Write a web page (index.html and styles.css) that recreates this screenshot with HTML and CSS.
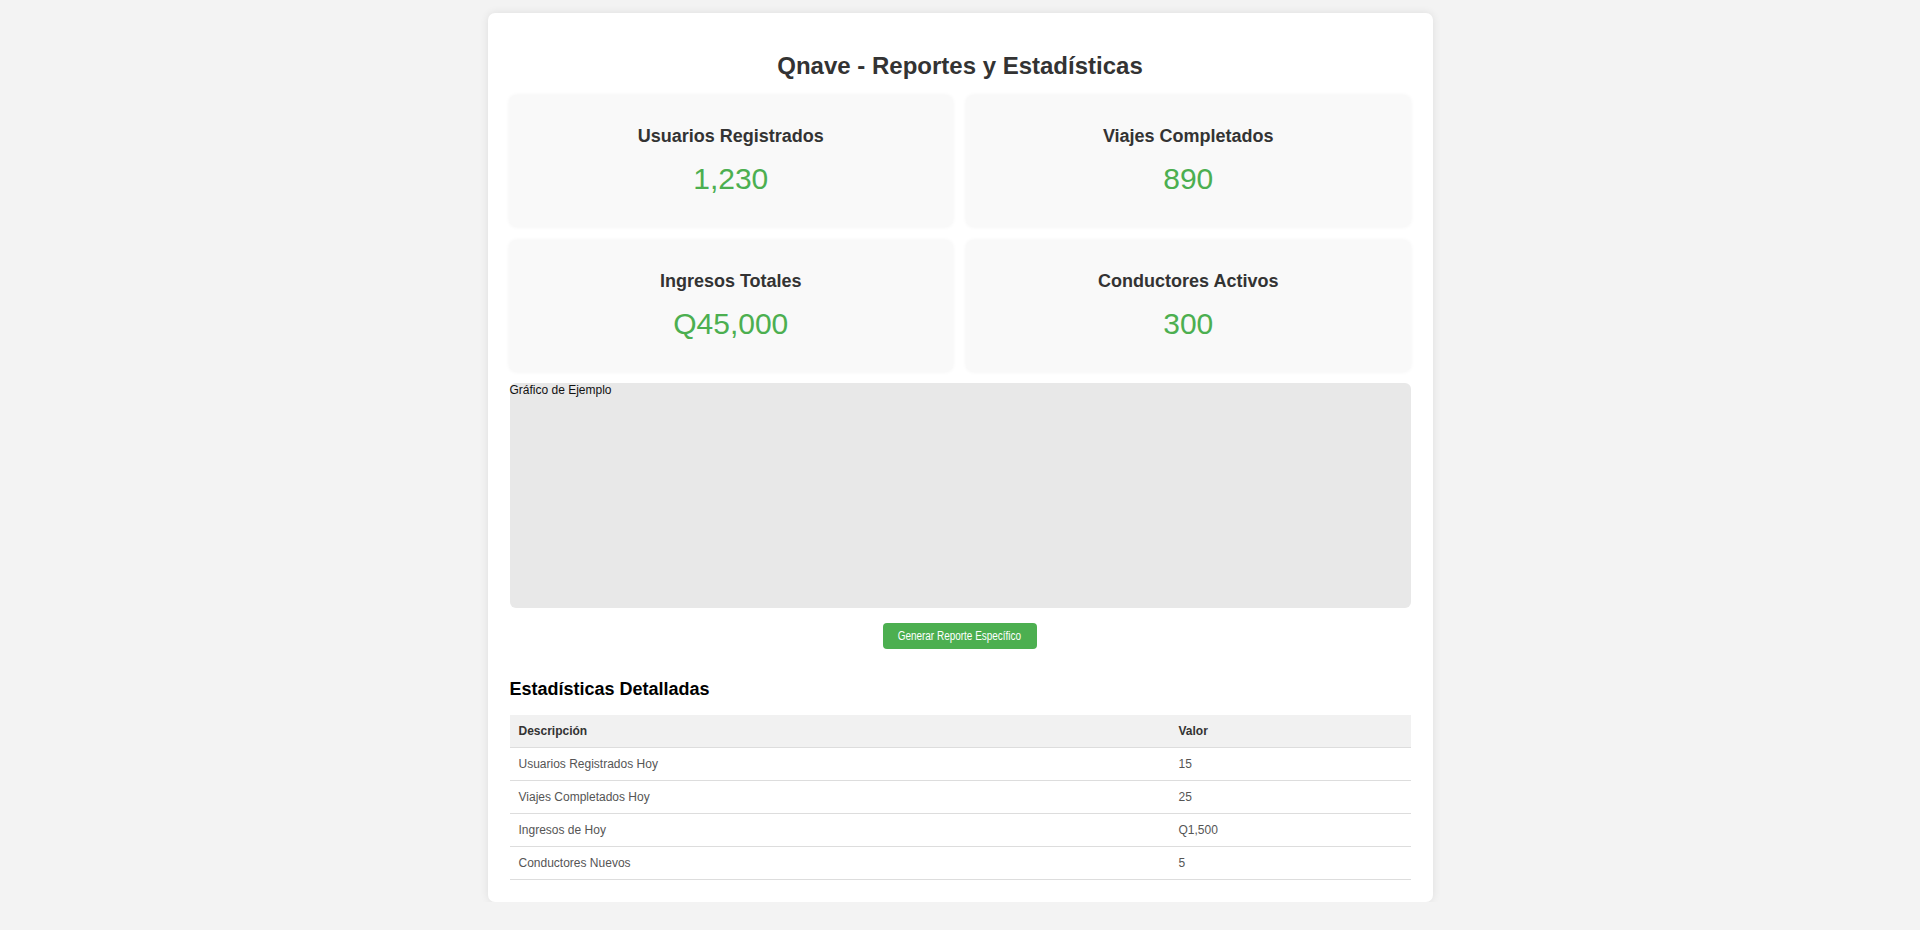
FILE: index.html
```html
<!DOCTYPE html>
<html lang="es">
<head>
<meta charset="utf-8">
<title>Qnave - Reportes y Estadísticas</title>
<link rel="stylesheet" href="styles.css">
</head>
<body>
<div class="container">
  <h1 class="title">Qnave - Reportes y Estadísticas</h1>
  <div class="stats">
    <div class="card"><h2 class="card-title">Usuarios Registrados</h2><p class="card-value">1,230</p></div>
    <div class="card"><h2 class="card-title">Viajes Completados</h2><p class="card-value">890</p></div>
    <div class="card"><h2 class="card-title">Ingresos Totales</h2><p class="card-value">Q45,000</p></div>
    <div class="card"><h2 class="card-title">Conductores Activos</h2><p class="card-value">300</p></div>
  </div>
  <div class="chart">Gráfico de Ejemplo</div>
  <div class="actions"><button class="btn" type="button"><span class="btn-label">Generar Reporte Específico</span></button></div>
  <h3 class="section-title">Estadísticas Detalladas</h3>
  <table class="table">
    <thead>
      <tr><th class="col-desc">Descripción</th><th>Valor</th></tr>
    </thead>
    <tbody>
      <tr><td>Usuarios Registrados Hoy</td><td>15</td></tr>
      <tr><td>Viajes Completados Hoy</td><td>25</td></tr>
      <tr><td>Ingresos de Hoy</td><td>Q1,500</td></tr>
      <tr><td>Conductores Nuevos</td><td>5</td></tr>
    </tbody>
  </table>
</div>
</body>
</html>
```
FILE: styles.css
```css
* { box-sizing: border-box; }
html, body { margin: 0; padding: 0; }
body {
  background: #f3f3f3;
  font-family: "Liberation Sans", Arial, sans-serif;
  color: #333;
  padding-top: 13px;
}
.container {
  width: 945px;
  margin: 0 auto;
  background: #fff;
  border-radius: 7px;
  box-shadow: 0 0 8px rgba(0,0,0,0.09);
  padding: 22px 22px 22px 22px;
}
.title {
  font-size: 24px;
  font-weight: bold;
  text-align: center;
  color: #333;
  margin: 17px 0 15px;
  line-height: 27.6px;
}
.stats {
  display: grid;
  grid-template-columns: 1fr 1fr;
  column-gap: 13px;
  row-gap: 13px;
  margin-left: -1px;
}
.card {
  background: #f9f9f9;
  border-radius: 8px;
  box-shadow: 0 0 4px rgba(0,0,0,0.05);
  padding: 31px 20px 0;
  text-align: center;
  height: 132px;
}
.card-title {
  font-size: 18px;
  font-weight: bold;
  color: #333;
  margin: 0 0 15.5px;
  line-height: 20.7px;
}
.card-value {
  font-size: 30px;
  color: #4caf50;
  margin: 0;
  line-height: 34.5px;
}
.chart {
  margin-top: 11px;
  height: 225px;
  background: #e8e8e8;
  border-radius: 6px;
  font-size: 12px;
  color: #111;
  line-height: 14px;
}
.actions {
  display: flex;
  justify-content: center;
  margin-top: 15px;
}
.btn {
  display: flex;
  align-items: center;
  justify-content: center;
  background: #4caf50;
  color: #fff;
  border: none;
  border-radius: 4px;
  height: 26px;
  width: 154px;
  padding: 0;
  font-family: "Liberation Sans", Arial, sans-serif;
  font-size: 12px;
  margin-left: -1px;
  white-space: nowrap;
}
.btn-label {
  display: inline-block;
  transform: scaleX(0.83);
}
.section-title {
  font-size: 18px;
  font-weight: bold;
  color: #000;
  margin: 30.5px 0 15.5px;
  line-height: 20.7px;
}
.table {
  width: 100%;
  border-collapse: collapse;
  font-size: 12px;
}
.table th, .table td {
  text-align: left;
  padding: 9px 9px;
  line-height: 14px;
  border-bottom: 1px solid #ddd;
}
.table th {
  background: #f1f1f1;
  color: #333;
  font-weight: bold;
}
.table td { color: #555; }
.col-desc { width: 660px; }
```
